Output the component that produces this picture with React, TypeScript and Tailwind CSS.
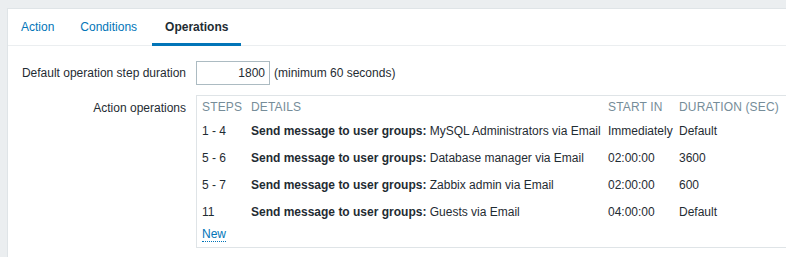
import React from "react";

const rows = [
  { steps: "1 - 4", detail: "MySQL Administrators via Email", start: "Immediately", dur: "Default" },
  { steps: "5 - 6", detail: "Database manager via Email", start: "02:00:00", dur: "3600" },
  { steps: "5 - 7", detail: "Zabbix admin via Email", start: "02:00:00", dur: "600" },
  { steps: "11", detail: "Guests via Email", start: "04:00:00", dur: "Default" },
];

export default function App() {
  return (
    <div
      className="h-[257px] w-[786px] overflow-hidden bg-[#ebeef0] pl-[7px] pt-[8px] text-[12px] text-[#1f2c33]"
      style={{ fontFamily: '"Liberation Sans", Arial, sans-serif' }}
    >
      <div className="h-[300px] border-l border-t border-[#dfe4e7] bg-white">
        <div className="flex h-[37px] border-b border-[#ebeef0]">
          <div className="flex items-center px-[13px] text-[#0275b8]">Action</div>
          <div className="flex items-center px-[13px] text-[#0275b8]">Conditions</div>
          <div className="relative ml-[2px] flex items-center px-[13px] font-bold">
            Operations
            <div className="absolute bottom-[-1px] left-0 right-0 h-[3px] bg-[#0275b8]" />
          </div>
        </div>
        <div className="pt-[15px]">
          <div className="flex items-center">
            <div className="w-[178px] text-right">Default operation step duration</div>
            <div className="ml-[10px] flex h-[24px] w-[74px] items-center justify-end border border-[#acbbc2] pr-[4px]">
              1800
            </div>
            <div className="ml-[4px]">(minimum 60 seconds)</div>
          </div>
          <div className="mt-[10px] flex items-start">
            <div className="w-[178px] pt-[4px] text-right">Action operations</div>
            <div className="ml-[10px] flex-1 border border-r-0 border-[#dfe4e7] px-[5px] pb-[4px]">
              <div className="flex h-[21px] items-end pb-[1px] tracking-[0.15px] text-[#768d99]">
                <div className="w-[49px]">STEPS</div>
                <div className="w-[357px]">DETAILS</div>
                <div className="w-[71px]">START IN</div>
                <div>DURATION (SEC)</div>
              </div>
              {rows.map((r) => (
                <div key={r.steps + r.detail} className="flex h-[27px] items-center">
                  <div className="w-[49px]">{r.steps}</div>
                  <div className="w-[357px]">
                    <span className="font-bold">Send message to user groups:</span> {r.detail}
                  </div>
                  <div className="w-[71px]">{r.start}</div>
                  <div>{r.dur}</div>
                </div>
              ))}
              <div className="flex h-[18px] items-center">
                <span className="border-b border-dotted border-[#0275b8] leading-[14px] text-[#0275b8]">New</span>
              </div>
            </div>
          </div>
        </div>
      </div>
    </div>
  );
}
